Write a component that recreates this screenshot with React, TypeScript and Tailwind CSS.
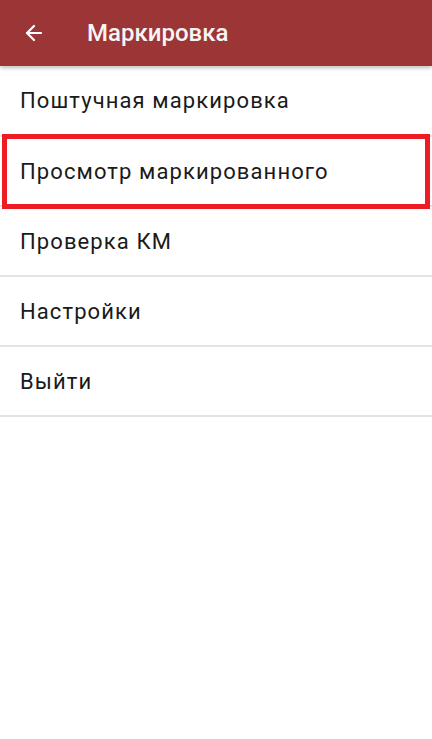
import { ArrowLeft } from 'lucide-react'

const ITEMS = ['Поштучная маркировка', 'Просмотр маркированного', 'Проверка КМ', 'Настройки', 'Выйти']

export default function App() {
  return (
    <div className="w-[432px] h-[739px] bg-white overflow-hidden" style={{ fontFamily: 'Roboto, "Noto Sans", sans-serif' }}>
      {/* Toolbar */}
      <div className="relative z-10 h-[66px] bg-[#9c3636] flex items-center shadow-[0_2px_4px_rgba(0,0,0,0.25)]">
        <div className="w-[68px] flex items-center justify-center">
          <ArrowLeft className="w-[24px] h-[24px] text-white" strokeWidth={2.2} />
        </div>
        <span className="ml-[19px] text-[24px] font-medium text-[#f5f5f5]">Маркировка</span>
      </div>

      {/* Menu */}
      <div className="flex flex-col">
        {ITEMS.map((item, i) => (
          <div key={item} className={`relative flex items-center border-b-2 border-[#e4e4e4] ${i === 0 ? 'h-[71px]' : 'h-[70px]'}`}>
            <span className="pl-[20px] text-[22px] tracking-[1.1px] text-[#1a1a1a]">{item}</span>
            {i === 1 && (
              <div className="absolute left-[2px] right-[2px] top-[-3px] bottom-[-4px] border-[5px] border-[#ed1c24]" />
            )}
          </div>
        ))}
      </div>
    </div>
  )
}
